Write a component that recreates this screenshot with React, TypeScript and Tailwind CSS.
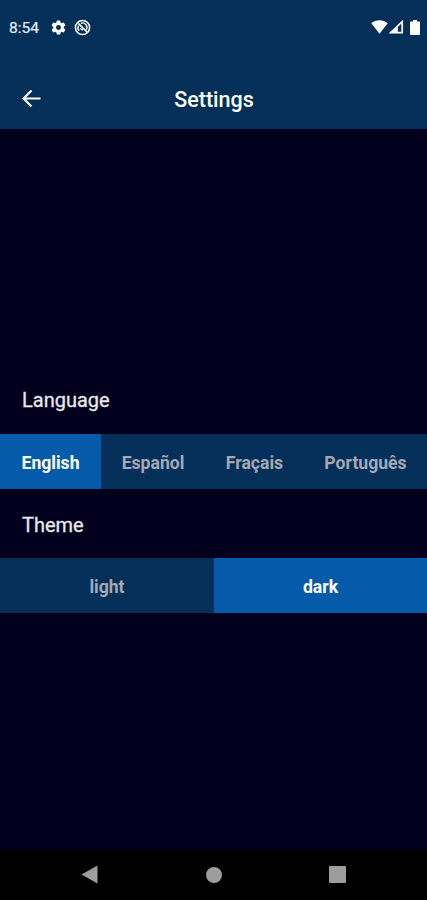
import { useState } from "react";
import clsx from "clsx";

const LANGUAGES = [
  { label: "English", width: "w-[101px]" },
  { label: "Español", width: "w-[104px]" },
  { label: "Fraçais", width: "w-[99px]" },
  { label: "Português", width: "w-[123px]" },
];

const THEMES = [
  { label: "light", width: "w-[214px]" },
  { label: "dark", width: "w-[213px]" },
];

function StatusBar() {
  return (
    <div className="flex h-[54px] items-center pl-[9px] pr-[7px] text-white">
      <span className="w-[41px] pt-[2px] text-[15.5px] leading-5 text-[#e6edf5] [-webkit-text-stroke:0.2px]">
        8:54
      </span>
      <svg className="size-[17px]" viewBox="0 0 24 24" fill="currentColor">
        <path
          fillRule="evenodd"
          d="M19.4 13c.04-.3.07-.66.07-1s-.03-.68-.07-1l2.1-1.65a.5.5 0 0 0 .12-.64l-2-3.46a.5.5 0 0 0-.6-.22l-2.5 1a7.3 7.3 0 0 0-1.7-.98l-.38-2.65A.5.5 0 0 0 14 2h-4a.5.5 0 0 0-.5.42l-.37 2.65c-.6.25-1.17.58-1.7.98l-2.48-1a.5.5 0 0 0-.6.22l-2 3.46a.5.5 0 0 0 .12.64L4.6 11a8 8 0 0 0 0 2l-2.12 1.65a.5.5 0 0 0-.12.64l2 3.46c.12.22.38.3.6.22l2.5-1c.52.4 1.08.73 1.7.98l.37 2.65c.04.24.25.4.5.4h4c.24 0 .45-.16.48-.4l.38-2.65c.6-.25 1.17-.58 1.7-.98l2.48 1c.23.08.48 0 .6-.22l2-3.46a.5.5 0 0 0-.12-.64ZM12 15.5a3.5 3.5 0 1 1 0-7 3.5 3.5 0 0 1 0 7Z"
        />
      </svg>
      <svg
        className="ml-[7px] size-[17px]"
        viewBox="0 0 17 17"
        fill="none"
        stroke="currentColor"
      >
        <circle cx="8.5" cy="8.5" r="7.1" strokeWidth="1.5" />
        <path
          d="M5.2 11.8A4.4 4.4 0 0 1 4.6 6.5M6.8 4.4a4.4 4.4 0 0 1 5.6 6.2"
          strokeWidth="1.3"
        />
        <path d="M4.3 4.3 13 13" strokeWidth="1.7" />
        <path d="M6.6 9a2.2 2.2 0 0 0 2.4 1.8" strokeWidth="1.4" />
      </svg>
      <div className="ml-auto flex items-center">
        <svg className="h-[14px] w-[17px]" viewBox="0 0 17 14" fill="currentColor">
          <path d="M.3 3.3C4.9-.7 12.1-.7 16.7 3.3L8.5 13.7Z" />
        </svg>
        <svg className="ml-px h-[14px] w-[15px]" viewBox="0 0 15 14">
          <path
            d="M1.7 12.7 13.2 1.7V12.7Z"
            fill="none"
            stroke="currentColor"
            strokeWidth="1.7"
          />
          <path d="M8.8 6.5V12.7H3V11.5Z" fill="currentColor" />
        </svg>
        <svg className="ml-[6px] h-[15px] w-[10px]" viewBox="0 0 10 15" fill="currentColor">
          <path d="M3 0h4v1.5h2a1 1 0 0 1 1 1V14a1 1 0 0 1-1 1H1a1 1 0 0 1-1-1V2.5a1 1 0 0 1 1-1h2Z" />
        </svg>
      </div>
    </div>
  );
}

function SegmentedControl({
  options,
  value,
  onChange,
}: {
  options: { label: string; width: string }[];
  value: string;
  onChange: (value: string) => void;
}) {
  return (
    <div className="flex h-[55px] bg-[#032f59]">
      {options.map(({ label, width }) => (
        <button
          key={label}
          type="button"
          onClick={() => onChange(label)}
          className={clsx(
            "flex items-center justify-center pt-[3px] text-[17.6px] font-bold",
            width,
            value === label ? "bg-[#055ba9] text-white" : "text-[#a5a9b3]"
          )}
        >
          {label}
        </button>
      ))}
    </div>
  );
}

export default function App() {
  const [language, setLanguage] = useState("English");
  const [theme, setTheme] = useState("dark");

  return (
    <div className="flex h-[900px] w-[427px] flex-col overflow-hidden bg-[#02001c] font-[Roboto,sans-serif]">
      <header className="h-[128.5px] bg-[#032f59]">
        <StatusBar />
        <div className="grid h-[74px] grid-cols-[60px_1fr_60px] items-center pb-[2px] pt-[18px] text-white">
          <button type="button" aria-label="Back" className="pl-[22px]">
            <svg
              className="h-[18px] w-[19px]"
              viewBox="0 0 19 18"
              fill="none"
              stroke="currentColor"
              strokeWidth="2.2"
            >
              <path d="M18.5 8.5H1.5M9.5.5 1.5 8.5 9.5 16.5" />
            </svg>
          </button>
          <h1 className="pl-px pt-[3px] text-center text-[21.5px] font-medium">
            Settings
          </h1>
        </div>
      </header>

      <main className="flex flex-1 flex-col pt-[256.5px]">
        <h2 className="h-[48px] pl-[22px] text-[20px] leading-[31px] text-[#e8e8ec] [-webkit-text-stroke:0.3px]">
          Language
        </h2>
        <div className="pt-px">
          <SegmentedControl options={LANGUAGES} value={language} onChange={setLanguage} />
        </div>
        <h2 className="h-[69px] pl-[22px] pt-[20.5px] text-[20px] leading-[31px] text-[#e8e8ec] [-webkit-text-stroke:0.3px]">
          Theme
        </h2>
        <SegmentedControl options={THEMES} value={theme} onChange={setTheme} />
      </main>

      <nav className="flex h-[51px] items-center justify-between bg-black px-[81px] text-[#9d9d9d]">
        <svg className="h-[19px] w-[17px]" viewBox="0 0 17 19" fill="currentColor">
          <path d="M.5 9.5 16.5.5V18.5Z" />
        </svg>
        <span className="size-[16px] rounded-full bg-current" />
        <span className="size-[17px] rounded-[1px] bg-current" />
      </nav>
    </div>
  );
}
